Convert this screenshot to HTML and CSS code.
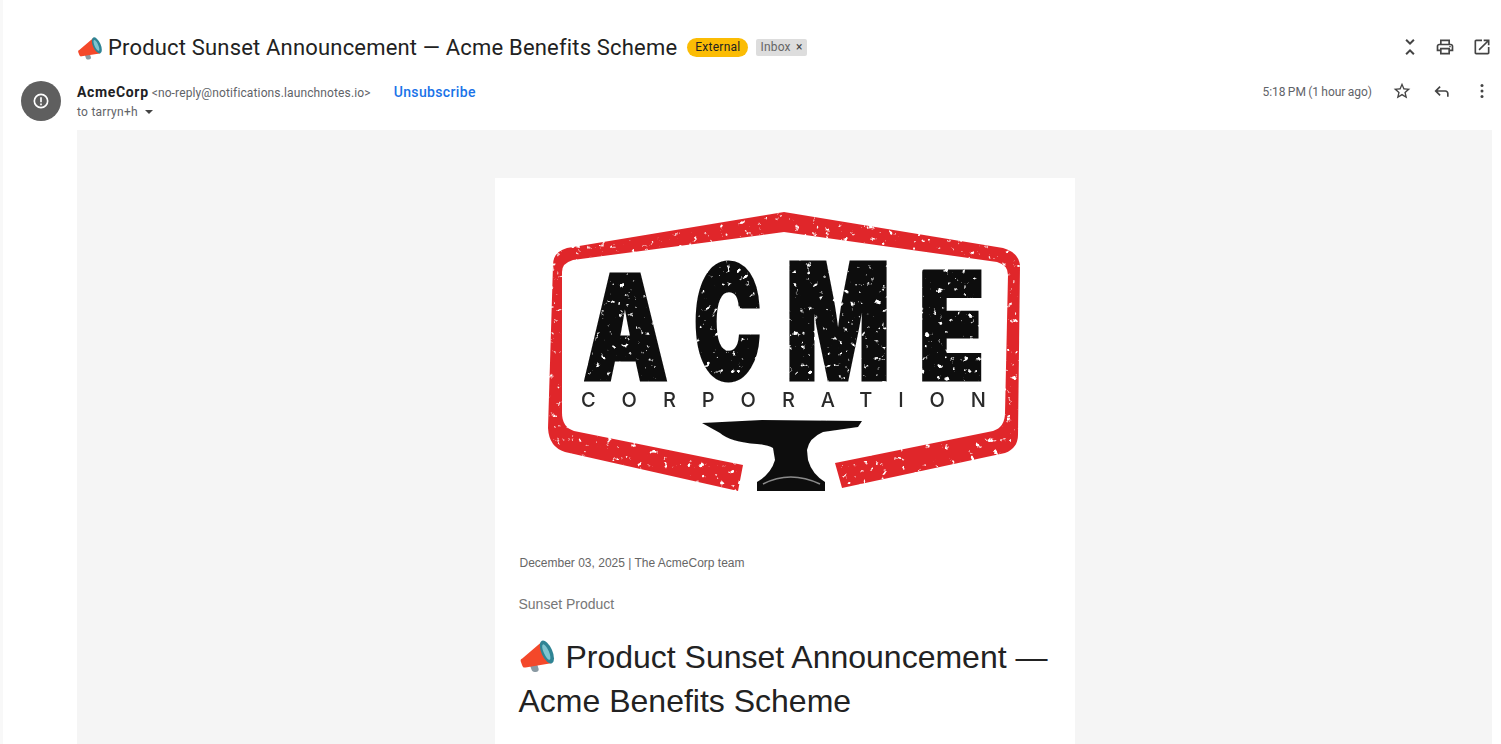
FILE: index.html

```html
<!DOCTYPE html>
<html>
<head>
  <title>Product Sunset Announcement</title>
  <link rel="stylesheet" href="styles.css">
</head>
<body>
  <svg class="defs" width="0" height="0">
    <symbol id="megaphone" viewBox="0 0 32 32">
      <path fill="#8a9aa3" d="M9 24l6-1 1.500 4.500c.4 1.500-.5 2.500-2.500 2.800-2 .3-3-.5-3.500-2z"/>
      <path fill="#f4482a" d="M2 19.500L19 5l8 18-21.500 3.500c-1.500.2-2.200-.2-2.700-1.500l-1.300-3.500c-.3-1 0-1.700.5-2.500z"/>
      <ellipse fill="#2f8494" cx="23.500" cy="13.500" rx="4.600" ry="10.300" transform="rotate(-24 23.500 13.500)"/>
      <ellipse fill="#7fc4cf" cx="23" cy="13.500" rx="2.200" ry="7" transform="rotate(-24 23 13.500)"/>
    </symbol>
  </svg>

  <div class="page">
    <div class="subject">
      <svg class="emoji"><use href="#megaphone"/></svg>
      <h2>Product Sunset Announcement — Acme Benefits Scheme</h2>
      <span class="badge-ext">External</span>
      <span class="badge-inbox">Inbox <b>×</b></span>
      <div class="actions top-actions">
        <svg class="unfold" viewBox="0 0 24 24"><path d="M7.410 18.590L8.830 20 12 16.830 15.170 20l1.410-1.410L12 14l-4.590 4.590zm9.180-13.180L15.170 4 12 7.170 8.830 4 7.410 5.410 12 10l4.590-4.590z"/></svg>
        <svg viewBox="0 0 24 24"><path d="M19 8h-1V3H6v5H5c-1.660 0-3 1.340-3 3v6h4v4h12v-4h4v-6c0-1.660-1.340-3-3-3zM8 5h8v3H8V5zm8 12v2H8v-4h8v2zm2-2v-2H6v2H4v-4c0-.55.45-1 1-1h14c.55 0 1 .45 1 1v4h-2z"/><circle cx="18" cy="11.500" r="1"/></svg>
        <svg viewBox="0 0 24 24"><path d="M19 19H5V5h7V3H5c-1.110 0-2 .9-2 2v14c0 1.100.89 2 2 2h14c1.100 0 2-.9 2-2v-7h-2v7zM14 3v2h3.590l-9.830 9.830 1.410 1.410L19 6.410V10h2V3h-7z"/></svg>
      </div>
    </div>

    <div class="sender">
      <div class="avatar">
        <svg viewBox="0 0 24 24"><path d="M12 3a9 9 0 1 0 0 18 9 9 0 0 0 0-18zm0 16a7 7 0 1 1 0-14 7 7 0 0 1 0 14zM11 7.500h2v6h-2zm0 7.500h2v2h-2z"/></svg>
      </div>
      <div class="from">
        <div class="from-line">
          <b>AcmeCorp</b>
          <span class="addr">&lt;no-reply@notifications.launchnotes.io&gt;</span>
          <a class="unsub">Unsubscribe</a>
        </div>
        <div class="to-line">to tarryn+h <i class="caret"></i></div>
      </div>
      <span class="time">5:18 PM (1 hour ago)</span>
      <div class="actions msg-actions">
        <svg viewBox="0 0 24 24"><path d="M22 9.240l-7.190-.62L12 2 9.190 8.630 2 9.240l5.460 4.730L5.820 21 12 17.270 18.180 21l-1.630-7.030L22 9.240zM12 15.400l-3.760 2.270 1-4.280-3.320-2.880 4.380-.38L12 6.100l1.710 4.040 4.380.38-3.320 2.880 1 4.280L12 15.400z"/></svg>
        <svg viewBox="0 0 24 24"><path d="M20 19v-4c0-2.200-1.800-4-4-4H6.830l3.580-3.590L9 6l-6 6 6 6 1.410-1.410L6.830 13H16c1.100 0 2 .9 2 2v4h2z"/></svg>
        <svg viewBox="0 0 24 24"><circle cx="12" cy="5.500" r="1.800"/><circle cx="12" cy="12" r="1.800"/><circle cx="12" cy="18.500" r="1.800"/></svg>
      </div>
    </div>

    <div class="mail-bg">
      <div class="card">
        <svg class="logo" viewBox="495 178 580 350">
          <defs>
            <filter id="worn" x="0" y="0" width="100%" height="100%">
              <feTurbulence type="fractalNoise" baseFrequency="0.16" numOctaves="3" seed="7" result="n"/>
              <feColorMatrix in="n" type="matrix" values="0 0 0 0 0  0 0 0 0 0  0 0 0 0 0  0 0 0 -9 7.100" result="mask"/>
              <feComposite in="SourceGraphic" in2="mask" operator="in"/>
              <feGaussianBlur stdDeviation="0.6"/>
            </filter>
            <filter id="soft"><feGaussianBlur stdDeviation="0.5"/></filter>
          </defs>
          <path class="shield" filter="url(#worn)" d="M743 465L574 431Q562 427 562 413L562 272Q562 263 573 260L784 232L997 262Q1008 265 1008 275L1005 413Q1005 427 993 431L835 463L842 488L1005 453Q1018 448 1018 435L1020 265Q1018 252 1003 248L784 212L567 248Q553 252 553 265L548 428Q549 447 565 452L738 491Z"/>
          <g class="acme" filter="url(#worn)">
            <text x="584" y="379" font-size="143" textLength="83" lengthAdjust="spacingAndGlyphs">A</text>
            <text x="694" y="378" font-size="156" textLength="67" lengthAdjust="spacingAndGlyphs">C</text>
            <text x="786" y="379" font-size="160" textLength="104" lengthAdjust="spacingAndGlyphs">M</text>
            <text x="919" y="379" font-size="147" textLength="65" lengthAdjust="spacingAndGlyphs">E</text>
          </g>
          <text class="corp" x="581" y="407" textLength="405" filter="url(#soft)">CORPORATION</text>
          <path class="anvil" filter="url(#soft)" d="M702 423L762 420L862 421L858 427L823 432Q809 438 807 450L808 460Q812 474 825 482L825 491L757 491L757 482Q771 474 775 460L773 448Q768 445 757 444Q730 442 720 433Z"/>
          <path class="anvil-arc" d="M763 484Q790 470 820 484" filter="url(#soft)"/>
        </svg>

        <div class="card-body">
          <p class="meta">December 03, 2025 | The AcmeCorp team</p>
          <p class="tag">Sunset Product</p>
          <h1><svg class="emoji-lg"><use href="#megaphone"/></svg> Product Sunset Announcement — Acme Benefits Scheme</h1>
        </div>
      </div>
    </div>
  </div>
</body>
</html>
```

FILE: styles.css

```css
html, body {
  margin: 0;
  height: 100%;
  overflow: hidden;
  background: #fff;
}
.defs {
  display: block;
}
.page {
  height: 744px;
  overflow: hidden;
  font-family: Roboto, Arial, sans-serif;
  color: #222;
  box-shadow: inset 3px 0 0 #f8f8f8;
}
.subject {
  display: flex;
  align-items: center;
  height: 24px;
  padding: 35px 9px 0 77px;
}
.emoji {
  width: 27px;
  height: 27px;
  margin-right: 4px;
}
.subject h2 {
  margin: 0 10px 0 0;
  font-size: 22px;
  font-weight: 400;
  letter-spacing: 0.18px;
  white-space: nowrap;
}
.badge-ext {
  background: #fbbc04;
  border-radius: 10px;
  padding: 0 8px;
  height: 19px;
  line-height: 19px;
  font-size: 12px;
  letter-spacing: 0.25px;
  margin-right: 8px;
}
.badge-inbox {
  background: #ddd;
  color: #666;
  border-radius: 2px;
  padding: 0 4px;
  height: 17px;
  line-height: 17px;
  font-size: 12px;
  letter-spacing: 0.2px;
}
.badge-inbox b {
  font-weight: 400;
  color: #444;
  margin-left: 2px;
}
.actions {
  display: flex;
  align-items: center;
}
.actions svg {
  width: 20px;
  height: 20px;
  fill: #444;
}
.top-actions {
  margin-left: auto;
  gap: 17px;
}
.actions .unfold {
  width: 24px;
  height: 24px;
  margin-right: -4px;
}
.sender {
  display: flex;
  padding: 22px 9px 0 21px;
  height: 49px;
}
.avatar {
  display: flex;
  align-items: center;
  justify-content: center;
  width: 40px;
  height: 40px;
  border-radius: 50%;
  background: #5f5f5f;
  margin-right: 16px;
}
.avatar svg {
  width: 20px;
  height: 20px;
  fill: #fff;
}
.from {
  flex: 1;
  padding-top: 1px;
}
.from-line {
  display: flex;
  align-items: baseline;
  height: 20px;
  line-height: 20px;
  font-size: 14px;
}
.from-line b {
  color: #202124;
  letter-spacing: 0.65px;
  margin-right: 3px;
}
.addr {
  font-size: 12px;
  letter-spacing: 0.13px;
  color: #5f6368;
}
.unsub {
  margin-left: 23px;
  color: #1a73e8;
  font-weight: 500;
  letter-spacing: 0.35px;
}
.to-line {
  font-size: 12px;
  line-height: 20px;
  letter-spacing: 0.25px;
  color: #5f6368;
}
.caret {
  display: inline-block;
  width: 0;
  height: 0;
  margin-left: 4px;
  vertical-align: 2px;
  border: 4px solid transparent;
  border-top-color: #444;
  border-bottom: 0;
}
.time {
  font-size: 12px;
  line-height: 20px;
  word-spacing: -0.7px;
  color: #5f6368;
  margin: 1px 20px 0 0;
}
.msg-actions {
  align-self: flex-start;
  height: 20px;
  gap: 20px;
}
.mail-bg {
  margin: 0 9px 0 77px;
  padding-top: 48px;
  height: 566px;
  background: #f5f5f5;
}
.card {
  width: 580px;
  height: 600px;
  margin: 0 auto;
  background: #fff;
}
.logo {
  display: block;
  width: 580px;
  height: 350px;
}
.shield {
  fill: #e0262b;
}
.acme text {
  font-family: Inter, "Liberation Sans", Arial, sans-serif;
  font-weight: 900;
  fill: #0c0c0c;
  stroke: #0c0c0c;
  stroke-width: 5;
}
.corp {
  font-family: Inter, Arial, sans-serif;
  font-size: 20px;
  font-weight: 500;
  fill: #2a2a2a;
}
.anvil {
  fill: #111;
}
.anvil-arc {
  fill: none;
  stroke: #8a8a8a;
  stroke-width: 1.500;
}
.card-body {
  padding: 0 24px;
  font-family: "Liberation Sans", Arial, sans-serif;
}
.meta {
  margin: 28px 0 0 1px;
  font-size: 12px;
  line-height: 14px;
  color: #666;
}
.tag {
  margin: 26px 0 0;
  font-size: 14px;
  line-height: 16px;
  color: #777;
}
h1 {
  margin: 23px 0 0;
  font-size: 32px;
  font-weight: 400;
  line-height: 44px;
  color: #222;
}
.emoji-lg {
  width: 38px;
  height: 38px;
  vertical-align: -6px;
}
```
